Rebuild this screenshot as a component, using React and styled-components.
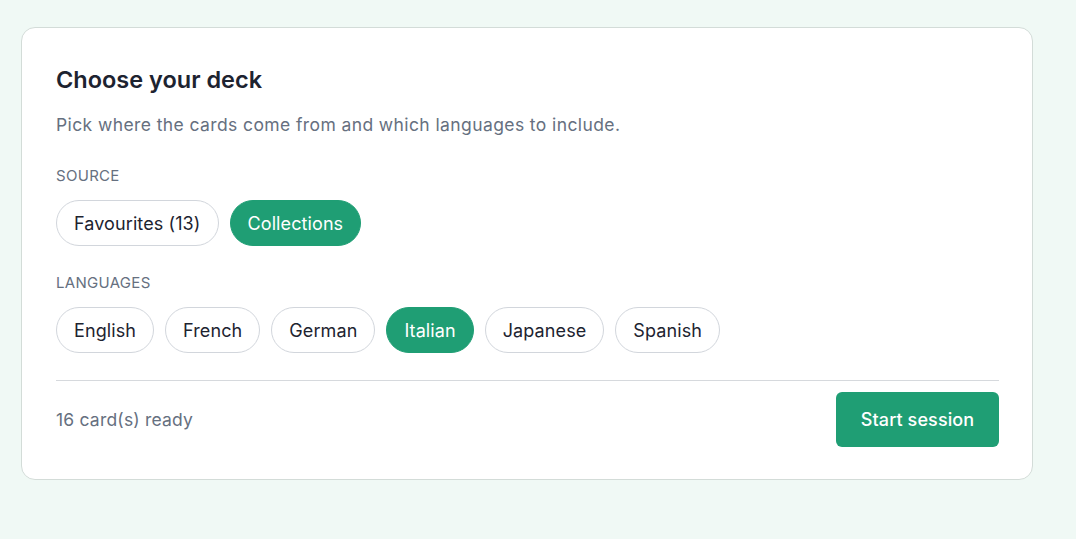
import React from "react";
import styled, { createGlobalStyle } from "styled-components";

const G = createGlobalStyle`
  body { margin:0; background:#f0f9f5; font-family: Inter, "Noto Sans", sans-serif; }
`;
const Page = styled.div`padding:27px 0 0 21px;`;
const Card = styled.div`
  width:1012px; box-sizing:border-box; height:453px; background:#fff;
  border:1px solid #d3dcd8; border-radius:14px; padding:38px 33px 0 34px;
`;
const Title = styled.h2`margin:0; font-size:23.5px; font-weight:600; color:#1d2330; letter-spacing:0; line-height:28px;`;
const Sub = styled.p`margin:19px 0 0; font-size:17.5px; color:#667080; line-height:24px; letter-spacing:0.4px;`;
const Label = styled.div`margin-top:${p=>p.$mt}px; font-size:15px; color:#667080; line-height:20px; letter-spacing:0.3px;`;
const Row = styled.div`display:flex; gap:11px; margin-top:14px;`;
const Pill = styled.button`
  height:46px; padding:0 17px; border-radius:23px; font:inherit; font-size:18px; letter-spacing:0.1px;
  border:1px solid ${p=>p.$on?"#1f9e74":"#d2d6dc"};
  background:${p=>p.$on?"#1f9e74":"#fff"}; color:${p=>p.$on?"#fff":"#1d2330"};
`;
const Divider = styled.hr`margin:27px 0 0; border:none; border-top:1px solid #d6d9dd;`;
const Footer = styled.div`display:flex; justify-content:space-between; align-items:center; margin-top:11px;`;
const Count = styled.span`font-size:17.5px; color:#667080; letter-spacing:0.2px;`;
const Btn = styled.button`
  width:163px; height:55px; border:none; border-radius:6px; background:#1f9e74; color:#fff;
  font:inherit; font-size:18px; font-weight:500; letter-spacing:0.1px;
`;

export default function App(){
  const langs=["English","French","German","Italian","Japanese","Spanish"];
  return <Page><G/><Card>
    <Title>Choose your deck</Title>
    <Sub>Pick where the cards come from and which languages to include.</Sub>
    <Label $mt={29}>SOURCE</Label>
    <Row><Pill>Favourites (13)</Pill><Pill $on>Collections</Pill></Row>
    <Label $mt={27}>LANGUAGES</Label>
    <Row>{langs.map(l=><Pill key={l} $on={l==="Italian"}>{l}</Pill>)}</Row>
    <Divider/>
    <Footer><Count>16 card(s) ready</Count><Btn>Start session</Btn></Footer>
  </Card></Page>;
}
